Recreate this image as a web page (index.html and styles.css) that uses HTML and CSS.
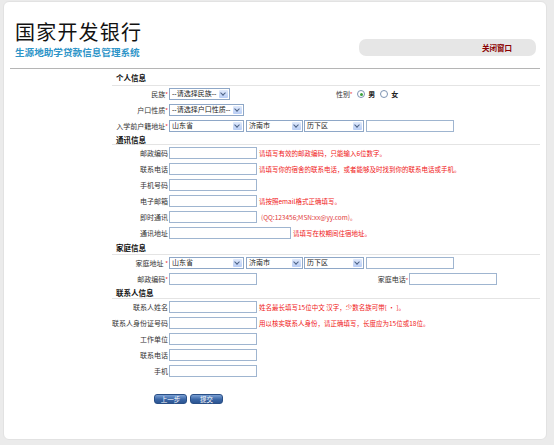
FILE: index.html
```html
<!DOCTYPE html>
<html lang="zh-CN">
<head>
<meta charset="utf-8">
<title>国家开发银行 - 生源地助学贷款信息管理系统</title>
<link rel="stylesheet" href="styles.css">
</head>
<body>
<div class="card">
  <header class="top">
    <div class="brand">
      <div class="title">国家开发银行</div>
      <div class="sub">生源地助学贷款信息管理系统</div>
    </div>
    <div class="bar"><a class="close">关闭窗口</a></div>
  </header>

  <div class="form">
    <div class="sec s1">个人信息</div>
    <div class="row">
      <span class="lb">民族<i>*</i></span>
      <span class="sel w61"><span class="tx">--请选择民族--</span><span class="arr"></span></span>
      <span class="gender">性别<i>*</i>
        <span class="radio on"></span><span class="opt">男</span>
        <span class="radio"></span><span class="opt">女</span>
      </span>
    </div>
    <div class="row">
      <span class="lb">户口性质<i>*</i></span>
      <span class="sel w75"><span class="tx">--请选择户口性质--</span><span class="arr"></span></span>
    </div>
    <div class="row">
      <span class="lb">入学前户籍地址<i>*</i></span>
      <span class="sel w75"><span class="tx">山东省</span><span class="arr"></span></span>
      <span class="sel w57 g2"><span class="tx">济南市</span><span class="arr"></span></span>
      <span class="sel w60 g1"><span class="tx">历下区</span><span class="arr"></span></span>
      <span class="inp w88 g2"></span>
    </div>

    <div class="sec s2">通讯信息</div>
    <div class="row">
      <span class="lb">邮政编码</span><span class="inp w88"></span>
      <span class="hint">请填写有效的邮政编码，只能输入6位数字。</span>
    </div>
    <div class="row">
      <span class="lb">联系电话</span><span class="inp w88"></span>
      <span class="hint">请填写你的宿舍的联系电话，或者能够及时找到你的联系电话或手机。</span>
    </div>
    <div class="row">
      <span class="lb">手机号码</span><span class="inp w88"></span>
    </div>
    <div class="row">
      <span class="lb">电子邮箱</span><span class="inp w88"></span>
      <span class="hint">请按照email格式正确填写。</span>
    </div>
    <div class="row">
      <span class="lb">即时通讯</span><span class="inp w88"></span>
      <span class="hint qq">(QQ:123456;MSN:xx@yy.com)。</span>
    </div>
    <div class="row">
      <span class="lb">通讯地址</span><span class="inp w122"></span>
      <span class="hint">请填写在校期间住宿地址。</span>
    </div>

    <div class="sec s3">家庭信息</div>
    <div class="row">
      <span class="lb">家庭地址 <i>*</i></span>
      <span class="sel w75"><span class="tx">山东省</span><span class="arr"></span></span>
      <span class="sel w57 g2"><span class="tx">济南市</span><span class="arr"></span></span>
      <span class="sel w60 g1"><span class="tx">历下区</span><span class="arr"></span></span>
      <span class="inp w88 g2"></span>
    </div>
    <div class="row">
      <span class="lb">邮政编码<i>*</i></span><span class="inp w88"></span>
      <span class="lb2">家庭电话<i>*</i></span><span class="inp w88"></span>
    </div>

    <div class="sec s4">联系人信息</div>
    <div class="row">
      <span class="lb">联系人姓名</span><span class="inp w88"></span>
      <span class="hint">姓名最长填写15位中文 汉字，少数名族可带[ · ]。</span>
    </div>
    <div class="row">
      <span class="lb">联系人身份证号码</span><span class="inp w88"></span>
      <span class="hint">用以核实联系人身份，请正确填写，长度应为15位或18位。</span>
    </div>
    <div class="row">
      <span class="lb">工作单位</span><span class="inp w88"></span>
    </div>
    <div class="row">
      <span class="lb">联系电话</span><span class="inp w88"></span>
    </div>
    <div class="row">
      <span class="lb">手机</span><span class="inp w88"></span>
    </div>

    <div class="btns">
      <span class="btn">上一步</span>
      <span class="btn">提交</span>
    </div>
  </div>
</div>
</body>
</html>
```

FILE: styles.css
```css
html, body {
  margin: 0;
  padding: 0;
  background: #ebebeb;
  font-family: "Liberation Sans", "Noto Sans CJK SC", sans-serif;
  color: #222;
}

.card {
  margin: 1px 7px 0 3px;
  height: 439px;
  background: #fff;
  border-radius: 6px;
  box-sizing: border-box;
  border: 1px solid #e2e2e2;
}

.top {
  margin: 0 6px;
  height: 67px;
  box-sizing: border-box;
  padding: 18px 0 0 5px;
  border-bottom: 1px solid #b5b5b5;
  display: flex;
  justify-content: space-between;
  align-items: flex-start;
}

.title {
  font-family: "Noto Sans CJK SC", sans-serif;
  font-size: 20px;
  line-height: 24px;
  letter-spacing: 1.2px;
  color: #111;
}

.sub {
  margin-top: 2px;
  font-family: "Noto Sans CJK SC", sans-serif;
  font-size: 9.6px;
  line-height: 12px;
  font-weight: bold;
  color: #2d94c8;
}

.bar {
  margin-top: 19px;
  margin-right: 4px;
  width: 177px;
  height: 17px;
  border-radius: 7px;
  background: #e6e6e6;
  display: flex;
  align-items: center;
  justify-content: flex-end;
  padding-right: 24px;
  box-sizing: border-box;
}

.close {
  font-family: "Noto Sans CJK SC", sans-serif;
  font-size: 7.5px;
  font-weight: bold;
  color: #8b0000;
}

.form {
  margin-left: 108px;
  width: 428px;
  font-size: 7px;
  color: #333;
}

.sec {
  font-family: "Noto Sans CJK SC", sans-serif;
  font-weight: bold;
  font-size: 7.5px;
  color: #111;
  padding-left: 4px;
  border-bottom: 1px solid #e4e4e4;
  display: flex;
  align-items: center;
  box-sizing: border-box;
}
.s1 { height: 17px; }
.s2 { height: 11px; }
.s3 { height: 14px; }
.s4 { height: 12px; }

.row {
  height: 16px;
  display: flex;
  align-items: center;
}

.lb {
  width: 56px;
  text-align: right;
  padding-right: 1px;
  white-space: nowrap;
  font-family: "Noto Sans CJK SC", sans-serif;
  font-size: 7px;
  color: #333;
}
.lb2 {
  margin-left: 118px;
  width: 33px;
  text-align: right;
  padding-right: 1px;
  white-space: nowrap;
  font-size: 7px;
  color: #333;
}

i {
  font-style: normal;
  color: #e33;
  font-size: 6px;
}

.sel {
  height: 12px;
  box-sizing: border-box;
  border: 1px solid #8ea7c7;
  background: #fff;
  display: flex;
  align-items: stretch;
  font-size: 7px;
}
.sel .tx {
  flex: 1;
  padding-left: 2px;
  line-height: 10px;
  white-space: nowrap;
  overflow: hidden;
  color: #222;
}
.sel .arr {
  width: 9px;
  margin: 1px;
  background: linear-gradient(#dfe9fb, #b8cdf5);
  border-radius: 1px;
  position: relative;
}
.sel .arr::after {
  content: "";
  position: absolute;
  left: 2px;
  top: 1px;
  width: 3px;
  height: 3px;
  border-right: 1.3px solid #4d6185;
  border-bottom: 1.3px solid #4d6185;
  transform: rotate(45deg);
}

.inp {
  height: 12px;
  box-sizing: border-box;
  border: 1px solid #9fb5d0;
  background: #fff;
}

.w57 { width: 57px; }
.w60 { width: 60px; }
.w61 { width: 61px; }
.w75 { width: 75px; }
.w88 { width: 88px; }
.w122 { width: 122px; }
.g1 { margin-left: 1px; }
.g2 { margin-left: 2px; }

.hint {
  margin-left: 2px;
  color: #f01818;
  font-size: 6.5px;
  white-space: nowrap;
  font-family: "Noto Sans CJK SC", sans-serif;
}
.hint.qq { margin-left: 4px; color: #e23a3a; }

.gender {
  margin-left: 106px;
  display: flex;
  align-items: center;
  font-size: 7px;
  white-space: nowrap;
}
.radio {
  width: 6px;
  height: 6px;
  border: 1px solid #7d93b2;
  border-radius: 50%;
  margin-left: 5px;
  position: relative;
  background: #fff;
}
.radio.on::after {
  content: "";
  position: absolute;
  left: 1.5px;
  top: 1.5px;
  width: 3px;
  height: 3px;
  border-radius: 50%;
  background: #3ca33c;
}
.opt {
  margin-left: 3px;
  font-weight: bold;
  color: #222;
}

.btns {
  margin-top: 15px;
  margin-left: 42px;
  display: flex;
  gap: 3px;
}
.btn {
  width: 33px;
  height: 10px;
  border-radius: 3px;
  background: linear-gradient(#7aa0d4, #3a66a6 55%, #2c5592);
  border: 1px solid #2a4f86;
  box-sizing: border-box;
  color: #fff;
  font-size: 6.5px;
  line-height: 8px;
  text-align: center;
  font-family: "Noto Sans CJK SC", sans-serif;
}
```
